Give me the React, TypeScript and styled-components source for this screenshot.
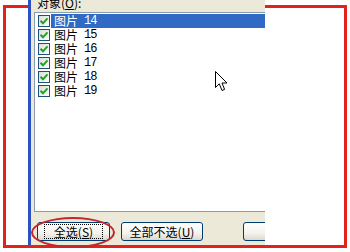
import styled, { createGlobalStyle } from "styled-components";

const GlobalStyle = createGlobalStyle`
  html, body {
    margin: 0;
    padding: 0;
    background: #ffffff;
  }
  body {
    width: 350px;
    height: 252px;
    overflow: hidden;
    font-family: "Noto Sans CJK SC", "DejaVu Sans", sans-serif;
  }
`;

const Frame = styled.div`
  position: relative;
  box-sizing: border-box;
  margin: 5px 0 0 3px;
  width: 344px;
  height: 243px;
  border: 3px solid #e32219;
  padding-left: 22px;
  display: flex;
`;

const Dialog = styled.div`
  position: relative;
  z-index: 1;
  margin-top: -8px;
  width: 237px;
  height: 245px;
  box-sizing: border-box;
  border-left: 3px solid #2b52c2;
  padding-left: 3px;
  background: #ece9d8;
  display: flex;
  flex-direction: column;
  overflow: hidden;
`;

const Label = styled.div`
  height: 12px;
  margin: -3px 0 3px 3px;
  font-size: 12px;
  line-height: 12px;
  color: #000;
  white-space: nowrap;
`;

const Key = styled.span`
  text-decoration: underline;
`;

const ListBox = styled.div`
  position: relative;
  height: 200px;
  box-sizing: border-box;
  margin-right: -10px;
  border: 1px solid #8c9cb0;
  background: #ffffff;
  padding-top: 1px;
`;

const Row = styled.div`
  display: flex;
  align-items: center;
  height: 14px;
  padding-left: 3px;
`;

const Check = styled.span`
  width: 12px;
  height: 12px;
  box-sizing: border-box;
  border: 1px solid #1c5180;
  background: linear-gradient(135deg, #dcdcd7, #ffffff);
  display: flex;
  align-items: center;
  justify-content: center;
  flex: none;
`;

const Name = styled.span<{ $selected?: boolean }>`
  flex: 1;
  height: 14px;
  margin-left: 1px;
  padding-left: 3px;
  display: flex;
  align-items: center;
  font-size: 12px;
  line-height: 14px;
  color: ${(p) => (p.$selected ? "#ffffff" : "#000000")};
  background: ${(p) => (p.$selected ? "#316ac5" : "transparent")};
`;

const Num = styled.span`
  margin-left: 6px;
  font-family: "Liberation Mono", monospace;
  font-size: 12px;
  letter-spacing: -1px;
  line-height: 14px;
`;

const Cursor = styled.svg`
  position: absolute;
  left: 180px;
  top: 58px;
`;

const ButtonRow = styled.div`
  display: flex;
  margin-top: 10px;
  padding-left: 3px;
`;

const Button = styled.div<{ $w: number; $gap?: number }>`
  width: ${(p) => p.$w}px;
  height: 19px;
  margin-left: ${(p) => p.$gap ?? 0}px;
  box-sizing: border-box;
  flex: none;
  border: 1px solid #003c74;
  border-radius: 3px;
  background: linear-gradient(#ffffff, #f3f2ec 60%, #dcd8cc);
  display: flex;
  align-items: center;
  justify-content: center;
  font-size: 12px;
  line-height: 14px;
  color: #000;
  white-space: nowrap;
`;

const Focus = styled.span`
  padding: 0 9px;
  height: 13px;
  line-height: 13px;
  border: 1px dotted #000;
`;

const Ellipse = styled.div`
  position: absolute;
  z-index: 2;
  left: 25px;
  top: 209px;
  width: 84px;
  height: 31px;
  box-sizing: border-box;
  border: 2px solid #c4262c;
  border-radius: 50%;
`;

const items = [14, 15, 16, 17, 18, 19];

export default function App() {
  return (
    <>
      <GlobalStyle />
      <Frame>
        <Dialog>
          <Label>
            对象(<Key>O</Key>):
          </Label>
          <ListBox>
            {items.map((n, i) => (
              <Row key={n}>
                <Check>
                  <svg width="10" height="10" viewBox="0 0 10 10">
                    <path d="M1.5 4.8 L4 7.3 L8.5 2.3" fill="none" stroke="#21a121" strokeWidth="2" />
                  </svg>
                </Check>
                <Name $selected={i === 0}>
                  图片<Num>{n}</Num>
                </Name>
              </Row>
            ))}
            <Cursor width="13" height="21" viewBox="0 0 13 21">
              <path
                d="M0.5 0.5 L0.5 16.5 L4.3 12.8 L7 19.5 L9.6 18.4 L7 12 L12 12 Z"
                fill="#ffffff"
                stroke="#000000"
                strokeWidth="1"
              />
            </Cursor>
          </ListBox>
          <ButtonRow>
            <Button $w={73}>
              <Focus>
                全选(<Key>S</Key>)
              </Focus>
            </Button>
            <Button $w={82} $gap={11}>
              全部不选(<Key>U</Key>)
            </Button>
            <Button $w={80} $gap={40} />
          </ButtonRow>
        </Dialog>
        <Ellipse />
      </Frame>
    </>
  );
}
